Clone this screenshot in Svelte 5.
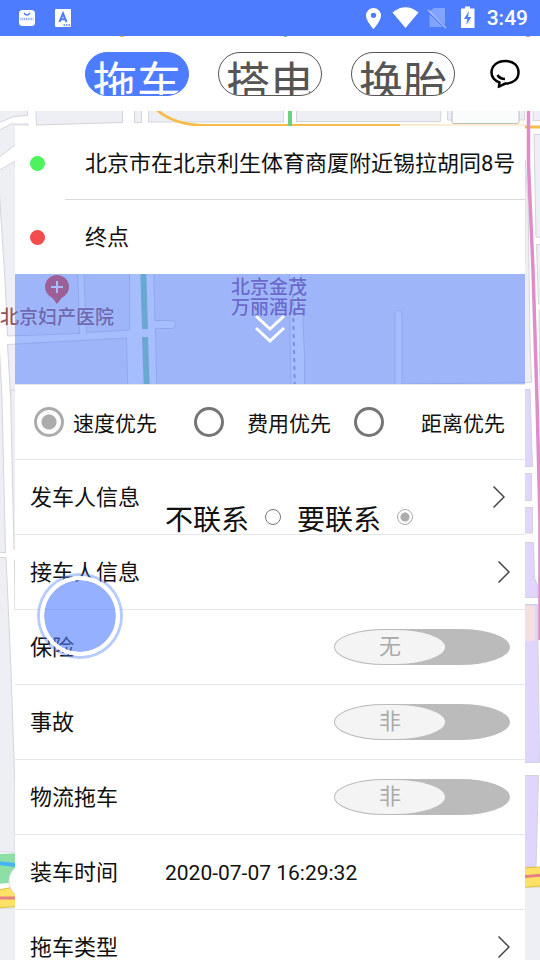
<script>
  const services = ["拖车", "搭电", "换胎"];
  const priorities = [
    { value: "speed", label: "速度优先" },
    { value: "cost", label: "费用优先" },
    { value: "distance", label: "距离优先" },
  ];

  let service = $state("拖车");
  let priority = $state("speed");
  let contact = $state("yes");
  let loadTime = $state("2020-07-07 16:29:32");
  let switches = $state([
    { id: "insurance", label: "保险", on: false, onText: "有", offText: "无" },
    { id: "accident", label: "事故", on: false, onText: "是", offText: "非" },
    { id: "logistics", label: "物流拖车", on: false, onText: "是", offText: "非" },
  ]);
</script>

{#snippet arrow()}
  <svg class="arrow" viewBox="0 0 12 22" aria-hidden="true">
    <path d="M0.5 0.5 L11 11 L0.5 21.5" />
  </svg>
{/snippet}

<div class="screen">
  <svg class="map" viewBox="0 0 540 960" preserveAspectRatio="xMidYMin slice" aria-hidden="true">
    <rect width="540" height="960" fill="#fff" />
    <path d="M120 36h4v2h-4z" fill="#f6bd4b" />
    <path d="M284 36h3v2h-3z" fill="#6dcf80" />
    <path d="M526 36h4v2h-4z" fill="#e08cca" />

    <g class="land">
      <path d="M-2 100H27.500V115.500L14 116.500L-2 123Z" />
      <path d="M35.500 100H122.500V122.500L36.500 125Z" />
      <path d="M134.500 100H141.500V122.500H134.500Z" />
      <path d="M148.500 100H283.500V122H148.500Z" />
      <path d="M296.500 100H441.500L440.500 121.500H296.500Z" />
      <path d="M448 100H524.500V120H447.500Z" />
      <path d="M533 100H542V120.500H533Z" />
      <path d="M-2 131L11 124H28V137L15 145L-2 158Z" />
      <path d="M15 161L-2 171L5 280L7.500 336L79.500 333.500L77.500 262H20Z" />
      <path d="M83.500 262H129.500V330L86.500 332.500Z" />
      <path d="M7.500 344.500L126.500 338L128 395H10.500Z" />
      <path d="M153.500 262L155 320.500H171Q175.500 320.500 175.500 324.500T171 328.500H155.500L157 395H291L289 262Z" />
      <path d="M300.500 262L304.500 355V395H395V314Q395 310.500 398.500 310.500T402 314V384L531.500 382.500L530 340L528 200L525 160V262Z" />
      <path d="M-2 320L2 400L5.500 552.500H-2Z" />
      <path d="M-2 557.500H6L11 670L15 790V852H-2Z" />
      <path d="M10.500 390L14 549H30V390Z" />
      <path d="M14.500 560L15 610H30V560Z" />
      <path d="M534 134.500H542V237.500L536 237Z" />
      <path d="M536.500 244.500H542V304H538.500Z" />
      <path d="M539 310H542V390H540Z" />
      <path d="M-2 908H20V962H-2Z" />
      <path d="M520 887H542V962H520Z" />
    </g>

    <g class="mall">
      <path d="M520 389.500H530L532.500 466.500H520Z" />
      <path d="M520 473.500H531.500V500.500H520Z" />
      <path d="M520 507.500H532.500V533H520Z" />
      <path d="M520 542.500H533.500L534.500 578L537.500 585V597.500H520Z" />
      <path d="M520 604.500H537.500L539.500 762.500H520Z" />
      <path d="M520 775.500H538.500L536 867H520Z" />
    </g>
    <path d="M520 606H535V641H520Z" fill="#f5dfe0" />

    <path d="M157 110Q174 125 206 125.500H400" fill="none" stroke="#f6bd4b" stroke-width="3" />
    <path d="M400 125H525" stroke="#f4dba6" />
    <path d="M525 127H542" stroke="#f6bd4b" stroke-width="3" />
    <path d="M290 100V128" stroke="#6dcf80" stroke-width="4" />
    <path d="M528.500 100V165L533 270L537 400L540 520V640" fill="none" stroke="#e08cca" stroke-width="3.500" />
    <rect x="452" y="90" width="67" height="33.500" rx="2" fill="#fafbfb" stroke="#bcbdbd" />

    <path d="M143 262L145 329M145 337L147 395" stroke="#86d6a0" stroke-width="6" />
    <path d="M292 262L295 395" stroke="#a6a9be" stroke-width="2" stroke-dasharray="4 4" />

    <path d="M-2 854L20 853V882L-2 884Z" fill="#8ce0a6" />
    <path d="M-2 863L20 865.500" stroke="#46b4f5" stroke-width="4" />
    <path d="M-2 890L20 886V906L-2 908Z" fill="#ffe168" stroke="#dec33e" />
    <path d="M-2 898H20" stroke="#e58184" stroke-width="3" />
    <circle cx="26" cy="881" r="17" fill="#fff" stroke="#ddd" />
    <path d="M520 868L542 867V886L520 887.500Z" fill="#ffe168" stroke="#dec33e" />
    <path d="M520 877L542 875" stroke="#e58184" stroke-width="3" />

    <path d="M57 304L52.500 298Q45 294 45 287A12 12 0 0 1 69 287Q69 294 61.500 298Z" fill="#e94630" />
    <path d="M51 287H63M57 281V293" stroke="#fff" stroke-width="2" />
    <text x="0" y="324" fill="#93545f">北京妇产医院</text>
    <text x="231" y="294" fill="#89569a">北京金茂</text>
    <text x="231" y="314" fill="#89569a">万丽酒店</text>
  </svg>

  <div class="status-bar">
    <svg class="app-icon" viewBox="0 0 16 18" aria-hidden="true">
      <rect y="1" width="16" height="16" rx="3.500" fill="#fff" />
      <path d="M5 4Q8 8 11 4" fill="none" stroke="#4d7cfe" stroke-width="1.300" />
      <path d="M1.500 10H14.500" stroke="#4d7cfe" stroke-width="2.500" stroke-dasharray="1 0.800" opacity="0.700" />
    </svg>
    <svg class="app-icon" viewBox="0 0 16 18" aria-hidden="true">
      <rect width="16" height="18" rx="1" fill="#fff" />
      <path d="M4.500 13L8 4.500L11.500 13M5.700 10.300H10.300" fill="none" stroke="#4d7cfe" stroke-width="2" />
      <path d="M8.500 16H15" stroke="#4d7cfe" stroke-width="1.500" stroke-dasharray="1.500 1" />
    </svg>
    <svg class="status-icons" viewBox="0 0 110 24" aria-hidden="true">
      <path d="M8.500 2A7.500 7.500 0 0 0 1 9.500C1 15 8.500 23 8.500 23S16 15 16 9.500A7.500 7.500 0 0 0 8.500 2ZM8.500 6.700A2.600 2.600 0 1 1 8.500 12A2.600 2.600 0 0 1 8.500 6.700Z" fill="#fff" fill-rule="evenodd" />
      <path d="M27.500 6.500Q40.500 -4 53.500 6.500L40.500 22Z" fill="#fff" />
      <path d="M69 2H80V19L64.500 5.500ZM64.500 8.500L78 21H64.500Z" fill="#fff" opacity="0.300" />
      <path d="M63 4L81 22" stroke="#fff" stroke-width="1.500" opacity="0.500" />
      <path d="M96 2.500H100V0.500H105V2.500H109.500V22H96Z" fill="#fff" />
      <path d="M104 5L99 13H102.300L101.300 19L106.300 11H103Z" fill="#4d7cfe" />
    </svg>
    <span class="clock">3:49</span>
  </div>

  <header>
    <nav>
      {#each services as name}
        <button class="service" class:active={service === name} onclick={() => (service = name)}>{name}</button>
      {/each}
    </nav>
    <button class="message" aria-label="消息">
      <svg viewBox="0 0 30 30">
        <path d="M9.500 23.500C4.500 21.500 1.500 18 1.500 13.500C1.500 6.500 7.500 2 15.500 2S28.500 6.500 28.500 13.500S22.500 24.500 15.500 24.500C12.500 25.500 11 27 9 27.500Z" />
        <path d="M7.500 16C9 18.500 11.500 20 15 20" />
      </svg>
    </button>
  </header>

  <main>
    <section class="route">
      <button class="place">
        <i class="dot start"></i>
        <span>北京市在北京利生体育商厦附近锡拉胡同8号</span>
      </button>
      <button class="place">
        <i class="dot end"></i>
        <span>终点</span>
      </button>
    </section>

    <button class="expand" aria-label="展开">
      <svg viewBox="0 0 32 30">
        <path d="M2 2L16 15L30 2M2 14L16 27L30 14" />
      </svg>
    </button>

    <section class="details">
      <div class="row priorities">
        {#each priorities as item}
          <label>
            <input type="radio" name="priority" value={item.value} bind:group={priority} />
            <span>{item.label}</span>
          </label>
        {/each}
      </div>

      <div class="row">
        <span class="name">发车人信息</span>
        <div class="contact">
          <label>不联系<input type="radio" name="contact" value="no" bind:group={contact} /></label>
          <label>要联系<input type="radio" name="contact" value="yes" bind:group={contact} /></label>
        </div>
        <button class="open" aria-label="发车人信息">{@render arrow()}</button>
      </div>

      <button class="row">
        <span class="name">接车人信息</span>
        {@render arrow()}
      </button>

      {#each switches as item}
        <div class="row">
          <label class="name" for={item.id}>{item.label}</label>
          <label class="switch" class:on={item.on}>
            <input id={item.id} type="checkbox" bind:checked={item.on} />
            <span class="knob">{item.on ? item.onText : item.offText}</span>
          </label>
        </div>
      {/each}

      <div class="row">
        <label class="name" for="load-time">装车时间</label>
        <input id="load-time" class="time" type="text" bind:value={loadTime} />
      </div>

      <button class="row">
        <span class="name">拖车类型</span>
        {@render arrow()}
      </button>
    </section>
  </main>

  <button class="assist" aria-label="悬浮球"></button>
</div>

<style>
  :global(body) {
    margin: 0;
  }

  .screen {
    position: relative;
    height: 100vh;
    overflow: hidden;
    background: #eeeff5;
    color: #111;
    font-family: Roboto, "Noto Sans CJK SC", sans-serif;
    font-size: 22px;
  }

  button,
  input {
    margin: 0;
    padding: 0;
    border: 0;
    background: none;
    color: inherit;
    font: inherit;
  }

  button,
  label {
    cursor: pointer;
  }

  svg {
    display: block;
  }

  .map {
    position: absolute;
    inset: 0;
    width: 100%;
    height: 100%;
  }

  .map text {
    font-size: 19px;
    font-weight: 500;
    stroke: #fff;
    stroke-width: 2px;
    stroke-opacity: 0.4;
    paint-order: stroke;
  }

  .land path {
    fill: #eeeff5;
    stroke: #d3d5d8;
  }

  .mall path {
    fill: #e0d6fd;
    stroke: #d3d2da;
  }

  .status-bar,
  header,
  main {
    position: relative;
  }

  .status-bar {
    display: flex;
    align-items: center;
    box-sizing: border-box;
    height: 36px;
    padding: 0 12px 0 19px;
    background: #4d7cfe;
    color: #fff;
  }

  .app-icon {
    width: 16px;
    height: 18px;
    margin-right: 20px;
  }

  .status-icons {
    width: 110px;
    height: 24px;
    margin: 0 12px 0 auto;
  }

  .clock {
    font-size: 21px;
    font-weight: 500;
  }

  header {
    display: flex;
    align-items: center;
    justify-content: space-between;
    height: 74px;
    margin-top: 1px;
    padding: 0 20px 0 85px;
    background: #fff;
  }

  nav {
    display: flex;
    gap: 29px;
  }

  .service {
    display: flex;
    align-items: flex-start;
    height: 44px;
    padding: 0 7px;
    overflow: hidden;
    border: 1px solid #555;
    border-radius: 22px;
    color: #555;
    font-family: "Noto Sans CJK SC", sans-serif;
    font-size: 44px;
    line-height: 54px;
  }

  .service.active {
    border-color: #4d7cfe;
    background: #4d7cfe;
    color: #fff;
  }

  .message svg {
    width: 30px;
    height: 30px;
    fill: none;
    stroke: #000;
    stroke-width: 2.5;
  }

  main {
    margin: 15px 15px 0;
  }

  .route {
    background: #fff;
  }

  .place {
    display: flex;
    align-items: center;
    width: 100%;
    height: 74px;
    padding-left: 15px;
    text-align: left;
    white-space: nowrap;
  }

  .place:first-child {
    background: linear-gradient(#d8d8d8, #d8d8d8) 50px 100% / 100% 1px no-repeat;
  }

  .place span,
  .name {
    padding-bottom: 4px;
  }

  .dot {
    width: 15px;
    height: 15px;
    margin-right: 40px;
    border-radius: 50%;
  }

  .dot.start {
    background: #4cf35c;
  }

  .dot.end {
    background: #f34c4c;
  }

  .expand {
    display: flex;
    align-items: center;
    justify-content: center;
    width: 100%;
    height: 110px;
    background: rgba(77, 124, 254, 0.5);
  }

  .expand svg {
    width: 32px;
    height: 30px;
    fill: none;
    stroke: #fff;
    stroke-width: 3;
  }

  .details {
    border-top: 1px solid #e6e6e8;
    background: #fff;
  }

  .row {
    display: flex;
    align-items: center;
    box-sizing: border-box;
    width: 100%;
    height: 75px;
    padding: 0 15px;
    border-bottom: 1px solid #e6e6e8;
    text-align: left;
  }

  .name {
    flex: none;
    width: 135px;
  }

  .arrow {
    width: 12px;
    height: 22px;
    margin-left: auto;
    fill: none;
    stroke: #444;
    stroke-width: 1.5;
  }

  .open {
    margin: 0 5px 0 auto;
  }

  .priorities {
    display: grid;
    grid-template-columns: 160px 160px 1fr;
    padding: 0 0 0 19px;
    font-size: 21px;
  }

  .priorities label {
    display: flex;
    align-items: center;
    gap: 9px;
    white-space: nowrap;
  }

  .priorities label:nth-child(2) {
    gap: 23px;
  }

  .priorities label:nth-child(3) {
    gap: 37px;
  }

  input[type="radio"] {
    appearance: none;
    box-sizing: border-box;
    width: 30px;
    height: 30px;
    border: 3px solid #757575;
    border-radius: 50%;
  }

  input[type="radio"]:checked {
    border-color: #acacac;
    background: radial-gradient(circle, #acacac 7px, transparent 8px);
  }

  .contact {
    display: flex;
    align-self: flex-end;
    gap: 16px;
    margin-bottom: -2px;
    font-size: 28px;
    line-height: 30px;
  }

  .contact label {
    display: flex;
    align-items: center;
    gap: 16px;
  }

  .contact input[type="radio"] {
    width: 16px;
    height: 16px;
    margin-bottom: 8px;
    border-width: 1px;
  }

  .contact input[type="radio"]:checked {
    background: radial-gradient(circle, #acacac 4px, transparent 5px);
  }

  .switch {
    display: flex;
    box-sizing: border-box;
    width: 176px;
    height: 36px;
    margin-left: auto;
    padding: 1px;
    border-radius: 50px / 18px;
    background: #bbb;
  }

  .switch input {
    appearance: none;
    width: 0;
    height: 0;
  }

  .switch.on {
    justify-content: flex-end;
    background: #4d7cfe;
  }

  .knob {
    width: 110px;
    border-radius: 50px / 17px;
    background: #f4f4f4;
    color: #aaa;
    line-height: 34px;
    text-align: center;
  }

  .time {
    flex: 1;
    min-width: 0;
    padding-top: 2px;
    font-size: 21px;
  }

  /* floating assist ball, sits above the form */
  .assist {
    position: absolute;
    top: 576px;
    left: 40px;
    width: 80px;
    height: 80px;
    border: 4px solid #fff;
    border-radius: 50%;
    background: rgba(77, 124, 254, 0.6) padding-box;
    box-shadow: 0 0 0 3px rgba(77, 124, 254, 0.4);
  }
</style>
